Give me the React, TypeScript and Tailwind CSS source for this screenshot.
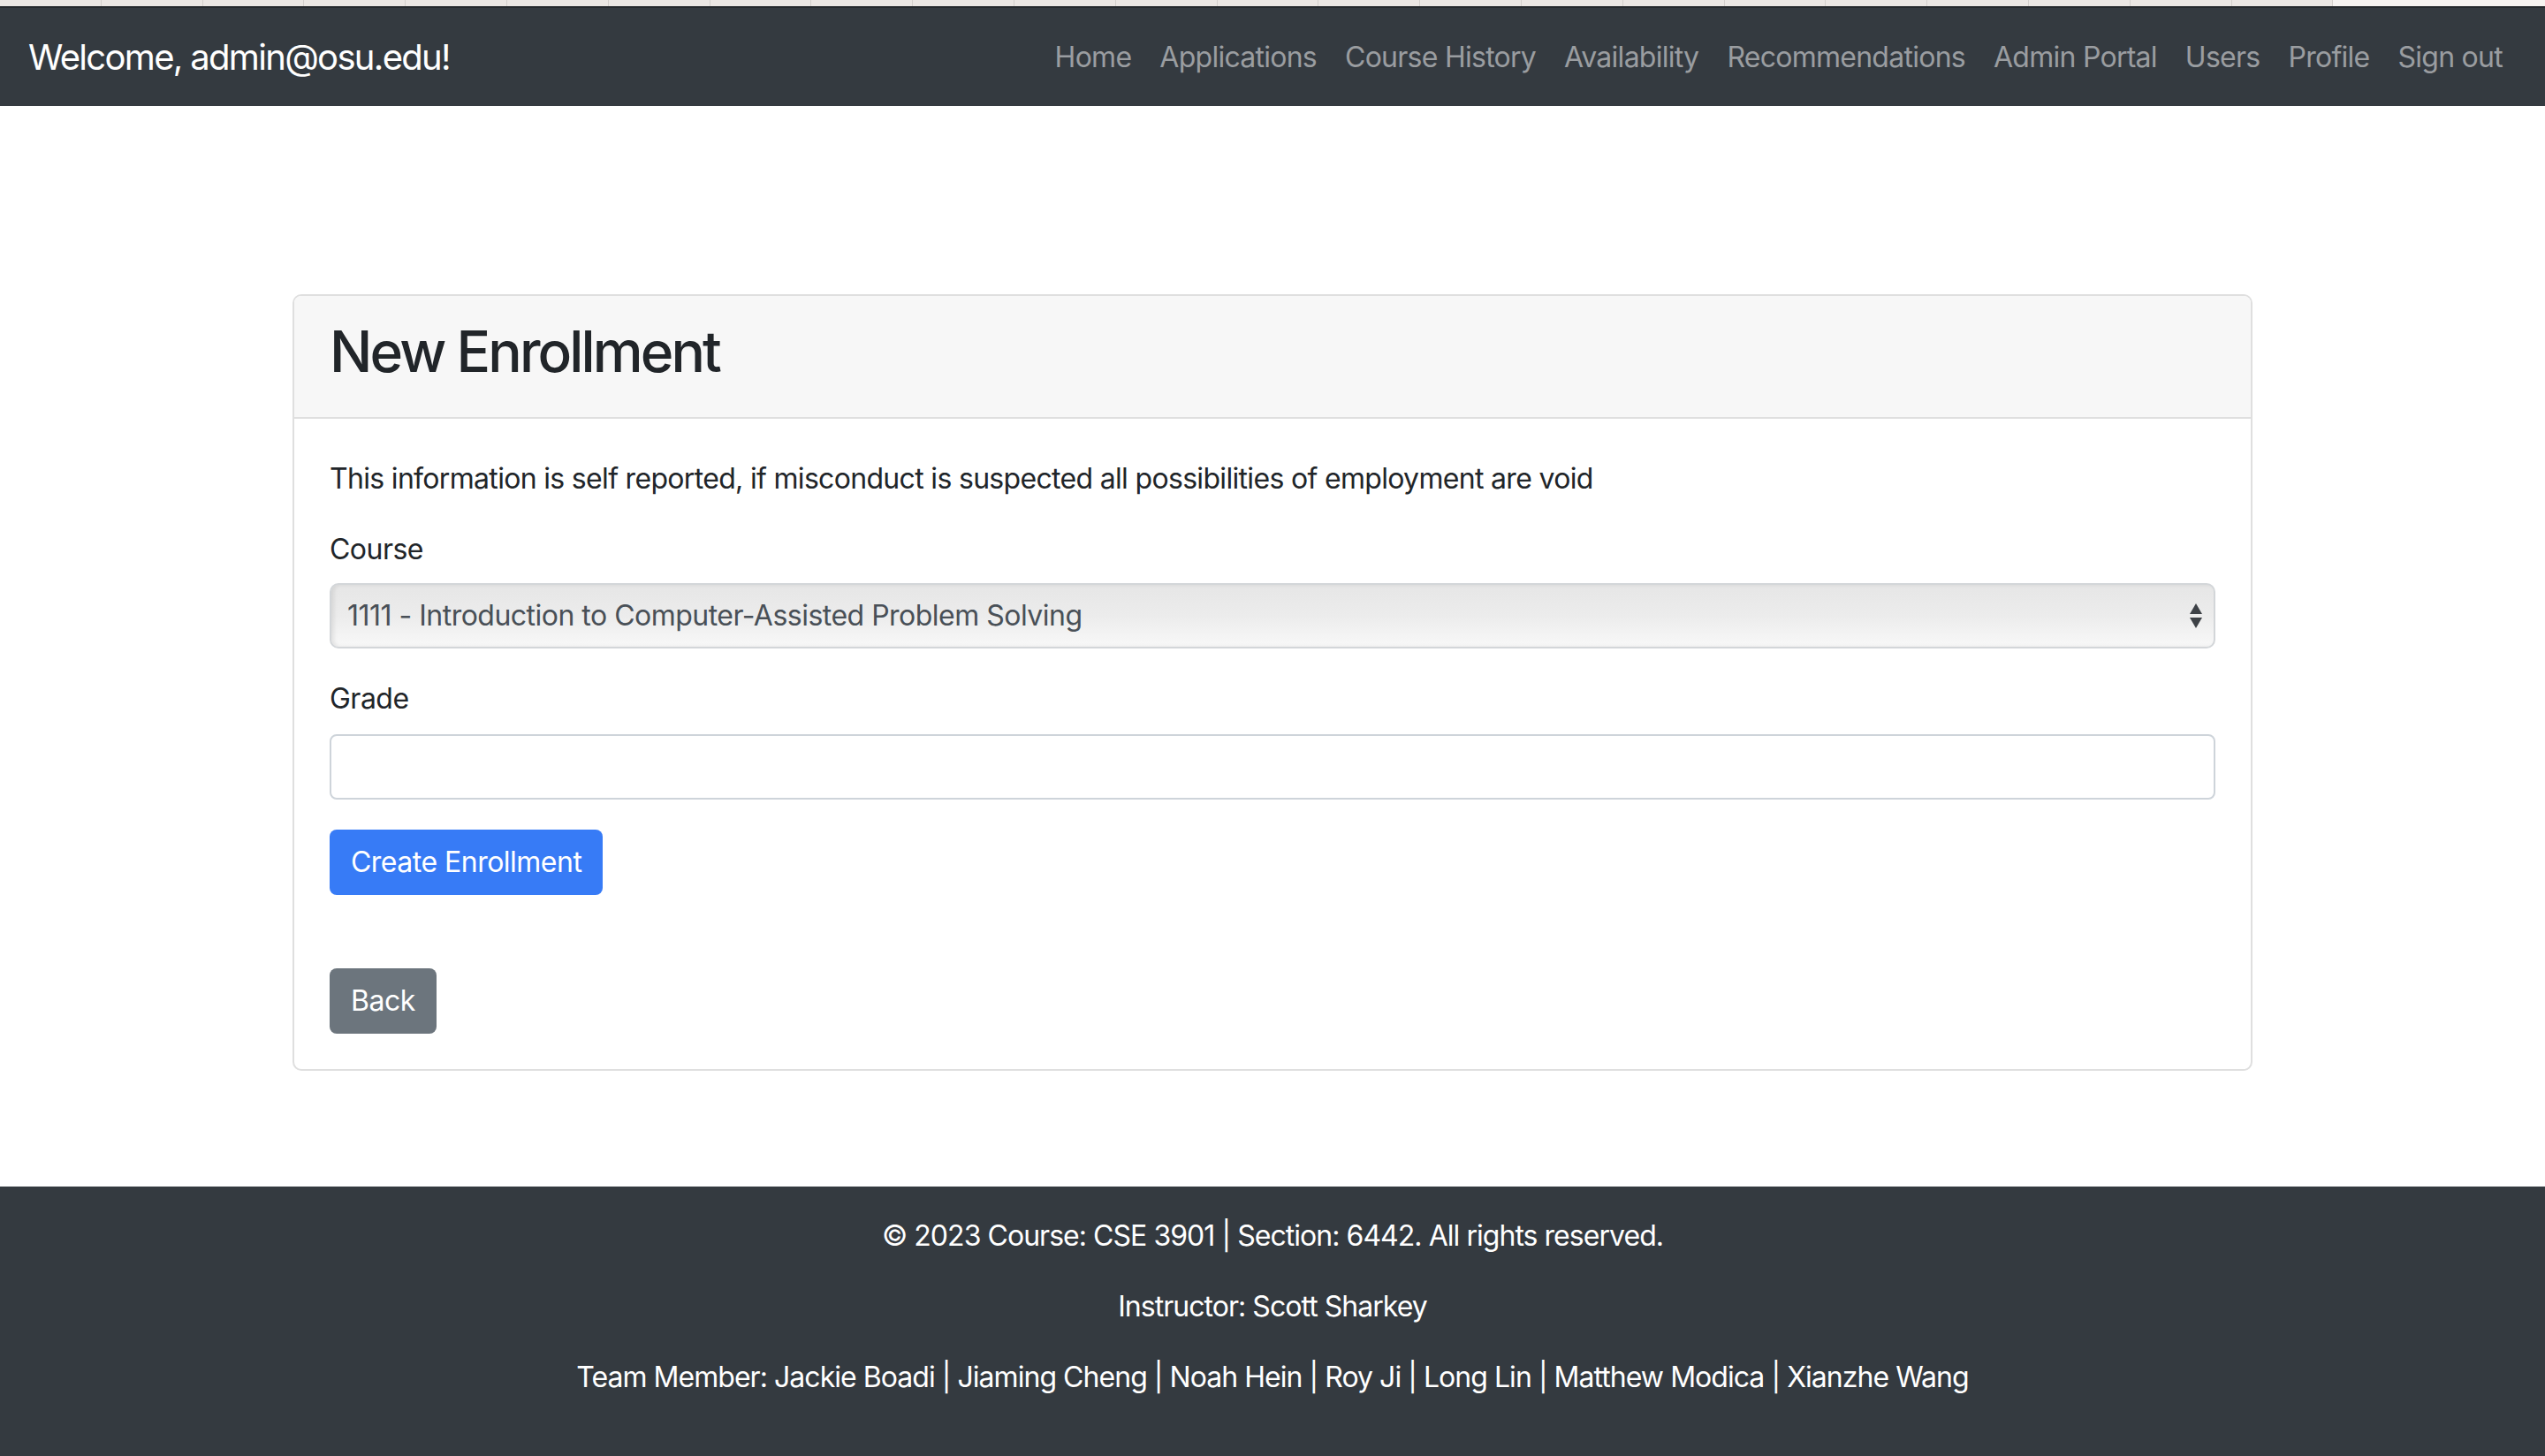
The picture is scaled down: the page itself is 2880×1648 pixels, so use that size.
import React from "react";

const navLinks = ["Home", "Applications", "Course History", "Availability", "Recommendations", "Admin Portal", "Users", "Profile", "Sign out"];

const team = ["Jackie Boadi", "Jiaming Cheng", "Noah Hein", "Roy Ji", "Long Lin", "Matthew Modica", "Xianzhe Wang"];

// browser tab strip peeking over the top of the page
const tabs = Array.from({ length: 23 }, (_, i) => i);

function SelectArrows() {
  return (
    <svg width="16" height="30" viewBox="0 0 16 30" className="shrink-0">
      <polygon points="8,1 15,13 1,13" fill="#3d4146" />
      <polygon points="1,17 15,17 8,29" fill="#3d4146" />
    </svg>
  );
}

export default function App() {
  return (
    <div className="min-h-screen flex flex-col bg-white text-[#212529] tracking-[-0.032em] font-['Inter','Liberation_Sans',sans-serif]">
      <div className="h-[7px] flex bg-[#f6f3f1]">
        {tabs.map((t) => (
          <div key={t} className="w-[114.8px] h-full bg-[#ebe7e4] border-r border-[#d4d0cd]" />
        ))}
        <div className="flex-1" />
      </div>
      <div className="h-[2px] bg-[#25292d]" />

      <nav className="h-[111px] bg-[#343a40] flex items-center justify-between px-[32px]">
        <span className="text-[40px] leading-[60px] text-white tracking-[-0.042em]">Welcome, admin@osu.edu!</span>
        <ul className="flex items-center">
          {navLinks.map((label) => (
            <li key={label}>
              <a className="block px-[16px] py-[16px] text-[32px] leading-[48px] text-[#9a9da0] tracking-[-0.023em] cursor-pointer">{label}</a>
            </li>
          ))}
        </ul>
      </nav>

      <main className="pt-[213px] pb-[131px]">
        <div className="mx-auto w-[2218px] border-2 border-[#dfdfdf] rounded-[10px] overflow-hidden">
          <div className="bg-[#f7f7f7] border-b-2 border-[#dfdfdf] px-[40px] pt-[24px] pb-[20px]">
            <h2 className="text-[64px] leading-[77px] font-medium tracking-[-0.045em] mb-[16px]">New Enrollment</h2>
          </div>
          <div className="px-[40px] pt-[44px] pb-[40px]">
            <p className="text-[32px] leading-[48px] tracking-[-0.68px] mb-[32px]">
              This information is self reported, if misconduct is suspected all possibilities of employment are void
            </p>
            <label className="block text-[32px] leading-[48px] mb-[14px]">Course</label>
            <div className="h-[74px] mb-[33px] flex items-center justify-between pl-[18px] pr-[12px] rounded-[10px] border-2 border-[#d3d6d9] bg-gradient-to-b from-[#e6e6e6] via-[#ececec] to-[#f8f8f8] shadow-[inset_3px_0_4px_rgba(0,0,0,0.08)]">
              <span className="text-[32px] leading-[48px] text-[#495057]">1111 - Introduction to Computer-Assisted Problem Solving</span>
              <SelectArrows />
            </div>
            <label className="block text-[32px] leading-[48px] mb-[16px]">Grade</label>
            <input type="text" className="block w-full h-[74px] mb-[34px] rounded-[8px] border-2 border-[#ced4da] bg-white px-[24px] text-[32px] outline-none" />
            <button className="block h-[74px] px-[24px] rounded-[8px] bg-[#377bf6] text-white text-[32px] leading-[48px]">Create Enrollment</button>
            <button className="block h-[74px] mt-[83px] px-[24px] rounded-[8px] bg-[#6c757d] text-white text-[32px] leading-[48px]">Back</button>
          </div>
        </div>
      </main>

      <footer className="bg-[#343a40] text-white text-center text-[32px] leading-[48px] tracking-[-0.03em] pt-[32px] pb-[33px]">
        <p className="mb-[32px]">© 2023 Course: CSE 3901 | Section: 6442. All rights reserved.</p>
        <p className="mb-[32px]">Instructor: Scott Sharkey</p>
        <p className="mb-[32px]">Team Member: {team.join(" | ")}</p>
      </footer>
    </div>
  );
}
